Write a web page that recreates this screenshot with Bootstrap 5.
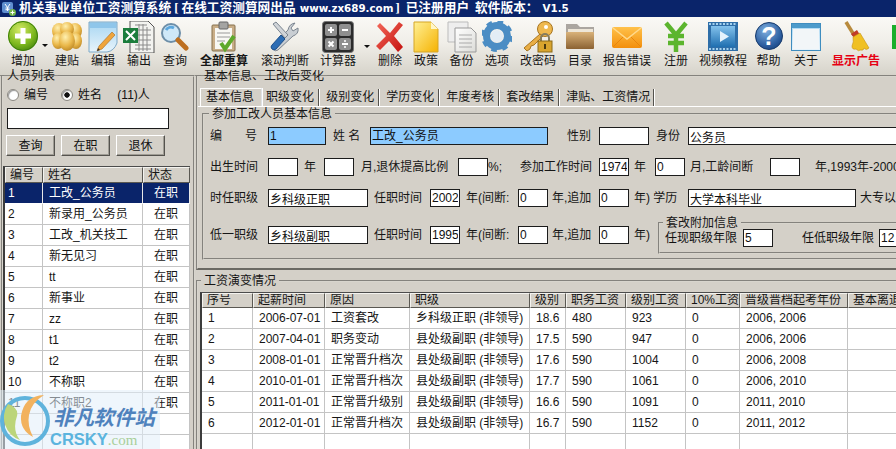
<!DOCTYPE html>
<html lang="zh-CN">
<head>
<meta charset="utf-8">
<title>机关事业单位工资测算系统</title>
<link href="https://cdn.jsdelivr.net/npm/bootstrap@5.3.0/dist/css/bootstrap.min.css" rel="stylesheet">
<style>
html,body{height:449px;overflow:hidden;margin:0}
body{background:#d4d0c8;color:#111;font:12px/14px "Liberation Sans","Noto Sans CJK SC",sans-serif}
.app-shell{position:relative;width:896px;height:449px;overflow:hidden}
.svgdefs{position:absolute;width:0;height:0}
.title-bar{height:17px;background:#0a246a;color:#fff;font:700 12.7px/17px "Liberation Serif","Noto Sans CJK SC",serif;padding-left:2px;white-space:nowrap}
.title-bar svg{margin-right:3px;flex:none}
.tt-ltn{font:700 10.3px/17px "DejaVu Sans",sans-serif;margin:0 2px 0 4px}
.tt-brk{margin:0 3px}
.tt-gap{margin-left:6px}
.tool-bar{height:59px;background:linear-gradient(#faf9f5,#f0eee8 45%,#d6d3ca);padding-top:4px;display:grid;grid-template-columns:5px 36px 8px 36px 36px 36px 36px 62px 60px 46px 11px 36px 36px 35px 36px 46px 38px 56px 42px 52px 39px 36px 64px 8px;border-bottom:1px solid #8c8a84}
.tool-item{display:flex;flex-direction:column;align-items:center;font-size:12px;line-height:13px;white-space:nowrap;color:#161616}
.tool-item svg{display:block;height:32px;flex:none;margin-bottom:2px}
.tool-strong{font-weight:700}
.tool-red{font-weight:700;color:#e60012}
.tool-arrow{width:0;height:0;border:3px solid transparent;border-top:3px solid #111;border-bottom:0;margin:23px 0 0 1px}
.tool-arrow-b{margin-left:3px;margin-top:24px}
.tool-end{background:#1cae2c;margin:4px 0 8px 4px;height:24px}
.main-area{display:flex;margin-top:-6px;height:379px}
.side-col{width:195px;flex:none;padding-left:1px}
.work-col{flex:1 1 auto;min-width:0;overflow:hidden;padding-left:1px}
fieldset.grp{border:2px groove #d8d5cd;padding:0;margin:0;min-width:0}
fieldset.grp>legend{float:none;width:auto;font-size:12px;line-height:12px;padding:0 3px;margin:0 0 0 3px;color:#161616}
.side-grp{height:382px;overflow:hidden}
fieldset.side-grp>legend{margin-left:1px}
.radio-row{height:14px;margin:6px 0 0 4px;gap:5px}
.radio-row .form-check-input{width:12px;height:12px;margin:0;border:1px solid #8a8780;border-radius:50%;background-color:#fff;box-shadow:inset 1px 1px 1px #999;flex:none}
.radio-row .form-check-input:checked{background-image:radial-gradient(circle,#111 0 2.4px,transparent 3px);background-color:#fff;border-color:#8a8780}
.radio-lbl{margin-right:8px}
.radio-cnt{margin-left:7px}
.form-control.fld{border:1px solid #1c1c1c;border-radius:0;height:18px;min-height:18px;padding:0 1px;font:12px/16px "Liberation Sans","Noto Sans CJK SC",sans-serif;color:#111;background:#fff;box-shadow:none;flex:none}
.form-control.fld-blue{background:#8ccbff}
.form-control.search-box{width:162px;margin:6px 0 0 4px;height:21px}
.btn-row{gap:6px;margin:6px 0 10px 3px}
.btn.btn-win{width:49px;height:21px;padding:0;border:1px solid;border-color:#fff #55534e #55534e #fff;border-radius:0;background:#d4d0c8;font-size:12px;line-height:18px;color:#111;box-shadow:inset -1px -1px 0 #a09d95}
.table.grid-tb{border-collapse:separate;border-spacing:0;table-layout:fixed;margin:0;font-size:12px;border-left:2px solid #3c3c3c;border-top:1px solid #4c4c4c;background:#fff}
.table.grid-tb>thead>tr>th{height:16px;padding:0 4px;line-height:14px;font-weight:400;background:#d4d0c8;color:#161616;border:1px solid;border-color:#f4f3ef #5a5852 #5a5852 #f4f3ef;white-space:nowrap;overflow:hidden;box-shadow:none}
.table.grid-tb>tbody>tr>td{height:21px;padding:0 6px;line-height:20px;background:#fff;color:#161616;border:0;border-right:1px solid #c4c4c4;border-bottom:1px solid #c4c4c4;white-space:nowrap;overflow:hidden;box-shadow:none}
.table.grid-tb>tbody>tr.sel-row>td{background:#0a246a;color:#fff;border-bottom:1px solid #fff;border-right:1px solid #e8e8e8}
.table.left-grid{width:187px}
.table.left-grid>tbody>tr>td:first-child{padding-left:3px}
.table.right-grid{width:730px}
.table.right-grid>thead>tr>th{height:15px;line-height:13px}
.table.grid-tb>tbody>tr>td.c-center{text-align:center;padding:0}
.c38{width:38px}.c100{width:100px}.c47{width:47px}
.c51{width:51px}.c72{width:72px}.c85{width:85px}.c120{width:120px}.c36{width:36px}.c60{width:60px}.c54{width:54px}.c108{width:108px}.c82{width:82px}
fieldset.top-grp{height:200px;margin-right:-12px;border-bottom:2px solid #6a6862}
.bot-grp{height:190px;margin:5px -12px 0 0!important;padding:0}
.tab-strip{margin:6px 0 0 2px;height:18px;border:0;flex-wrap:nowrap}
.tab-strip .nav-link{height:17px;margin:1px 0 0;padding:1px 0 0 4px;border:0;border-radius:0;border-right:1px solid #55534e;box-shadow:1px 0 0 #fff;background:transparent;color:#161616;font-size:12px;line-height:14px;white-space:nowrap;text-align:left}
.tab-strip .nav-link.active{height:18px;margin-top:0;padding:1px 0 0 5px;background:#d4d0c8;border-top:1px solid #fff;border-left:1px solid #fff;color:#111;font-size:12px}
.tw62{width:62px}.tw57{width:57px}.tw60{width:60px}.tw95{width:95px}
.tab-panel{border-top:1px solid #fff;height:160px;padding:1px 0 0 4px}
.info-grp{height:152px}
fieldset.info-grp>legend{margin-left:5px}
.form-body{padding:7px 0 0 6px;white-space:nowrap;width:800px}
.form-line{display:flex;align-items:flex-start;line-height:18px}
.form-line+.form-line{margin-top:13px}
.form-line.line-last{margin-top:19px}
.lb{flex:none;display:block;height:18px;color:#161616}
.pl4{padding-left:4px}.pl5{padding-left:5px}.pl6{padding-left:6px}.pl7{padding-left:7px}.pl15{padding-left:15px}.pl19{padding-left:19px}
.form-control.w30,.w30{width:30px}.w26{width:26px}.w29{width:29px}.w39{width:39px}.w44{width:44px}.w51{width:51px}.w59{width:59px}.w62{width:62px}.w85{width:85px}.w104{width:104px}.w111{width:111px}
.w58{width:58px}.form-control.w58{width:58px}.form-control.w50{width:50px}.form-control.w100{width:100px}.form-control.w168{width:168px}.form-control.w178{width:178px}.form-control.w230{width:230px}
.gap-em{display:inline-block;width:23px}
.gap-sp{display:inline-block;width:18px}
fieldset.sub-grp{width:300px;height:37px;margin-top:-9px;flex:none}
fieldset.sub-grp>legend{margin-left:3px}
.sub-line{display:flex;margin:0 0 0 5px;line-height:18px}
.sub-line .w78{width:78px;flex:none}
.sub-line .w106{width:106px;flex:none;padding-left:29px}
.table-wrap{margin:5px 0 0 2px;overflow:hidden}
.wm-box{position:absolute;left:0;top:390px;width:160px;height:59px;background:rgba(226,238,250,.55);pointer-events:none}
.wm-logo{position:absolute;left:0;top:2px}
.wm-cn{position:absolute;left:53px;top:13px;font:italic 700 20.5px/26px "Noto Sans CJK SC",sans-serif;letter-spacing:-.2px;color:#4f82bd;white-space:nowrap}
.wm-en{position:absolute;left:50px;top:39px;font:700 16.5px/20px "Liberation Sans",sans-serif;color:#5bb4de;white-space:nowrap}
.wm-en span{font:400 15px/20px "Liberation Serif",serif;color:#a8cf9a}
</style>
</head>
<body>
<svg class="svgdefs" aria-hidden="true">
<defs>
<radialGradient id="gGreen" cx=".4" cy=".3" r=".8"><stop offset="0" stop-color="#d5ea66"/><stop offset=".6" stop-color="#7eb81e"/><stop offset="1" stop-color="#3d7f0b"/></radialGradient>
<radialGradient id="gGold" cx=".4" cy=".3" r=".8"><stop offset="0" stop-color="#fff0b0"/><stop offset=".55" stop-color="#eab84a"/><stop offset="1" stop-color="#b57f1e"/></radialGradient>
<linearGradient id="gSky" x1="0" y1="0" x2="0" y2="1"><stop offset="0" stop-color="#a7d6f2"/><stop offset="1" stop-color="#e8f4fb"/></linearGradient>
<linearGradient id="gPaper" x1="0" y1="0" x2="1" y2="1"><stop offset="0" stop-color="#fff"/><stop offset="1" stop-color="#dcdcd8"/></linearGradient>
<linearGradient id="gYellow" x1="0" y1="0" x2="1" y2="1"><stop offset="0" stop-color="#fff095"/><stop offset="1" stop-color="#f5b200"/></linearGradient>
<radialGradient id="gBlue" cx=".4" cy=".3" r=".8"><stop offset="0" stop-color="#7fb0e0"/><stop offset=".7" stop-color="#2c5d9f"/><stop offset="1" stop-color="#183f78"/></radialGradient>
<linearGradient id="gFolder" x1="0" y1="0" x2="0" y2="1"><stop offset="0" stop-color="#d9b27a"/><stop offset="1" stop-color="#8b6232"/></linearGradient>
<linearGradient id="gOrange" x1="0" y1="0" x2="0" y2="1"><stop offset="0" stop-color="#ffc14a"/><stop offset="1" stop-color="#f38f0c"/></linearGradient>
<linearGradient id="gFilm" x1="0" y1="0" x2="0" y2="1"><stop offset="0" stop-color="#83c2ec"/><stop offset="1" stop-color="#1f6fb0"/></linearGradient>
<linearGradient id="gRed" x1="0" y1="0" x2="1" y2="1"><stop offset="0" stop-color="#f46a5c"/><stop offset="1" stop-color="#c4100c"/></linearGradient>
</defs>
</svg>
<div class="app-shell">
  <div class="title-bar d-flex align-items-center">
    <svg width="14" height="15" viewBox="0 0 14 15"><rect x="0" y="1" width="11" height="11" rx="2" fill="#5f8fd0"/><path d="M3 3l2.500 3.500L8 3M5.500 6.500V10M3.500 7h4M3.500 8.700h4" stroke="#fff" fill="none"/><circle cx="10.500" cy="11.500" r="3.500" fill="#74b64a"/><path d="M10.500 9.500v4M8.500 11.500h4" stroke="#fff"/></svg>
    <span>机关事业单位工资测算系统<span class="tt-brk">[</span>在线工资测算网出品<span class="tt-ltn">www.zx689.com</span>]<span class="tt-gap">已注册用户</span><span class="tt-gap">软件版本：</span><span class="tt-ltn">V1.5</span></span>
  </div>
  <div class="tool-bar">
    <div></div>
    <div class="tool-item"><svg width="32" viewBox="0 0 32 32"><circle cx="16" cy="15" r="15" fill="url(#gGreen)"/><circle cx="16" cy="15" r="14.500" fill="none" stroke="#3d7f0b"/><path d="M16 7v16M8 15h16" stroke="#fff" stroke-width="5"/></svg>增加</div>
    <div><div class="tool-arrow"></div></div>
    <div class="tool-item"><svg width="34" viewBox="0 0 34 32"><ellipse cx="9" cy="10" rx="7" ry="8" fill="url(#gGold)"/><ellipse cx="25" cy="10" rx="7" ry="8" fill="url(#gGold)"/><ellipse cx="17" cy="8" rx="7" ry="7" fill="url(#gGold)"/><ellipse cx="8" cy="20" rx="6" ry="8" fill="url(#gGold)"/><ellipse cx="26" cy="20" rx="6" ry="8" fill="url(#gGold)"/><ellipse cx="17" cy="20" rx="8" ry="10" fill="url(#gGold)"/></svg>建贴</div>
    <div class="tool-item"><svg width="30" viewBox="0 0 30 32"><path d="M1 1h28v21q-3 8-10 9H1z" fill="url(#gSky)" stroke="#7da9c8"/><rect x="2" y="2" width="26" height="5" fill="#8fc6ea"/><path d="M24 11L11 25l-2 5 5-2L27 14z" fill="#efa53c" stroke="#a86a1c" stroke-width=".6"/><path d="M9 30l1-3 2 2z" fill="#333"/></svg>编辑</div>
    <div class="tool-item"><svg width="32" viewBox="0 0 32 32"><path d="M7 0h18l6 6v26H7z" fill="#f3f3f0" stroke="#555"/><path d="M12 4h12M12 9h16M12 14h16M12 19h16M12 24h16M12 28h16M16 3v27M20 3v27M24 6v24" stroke="#8b8b8b" stroke-width="1"/><rect x="0" y="7" width="15" height="15" fill="#1b7d3c"/><path d="M3 10l9 9M12 10l-9 9" stroke="#fff" stroke-width="2"/></svg>输出</div>
    <div class="tool-item"><svg width="28" viewBox="0 0 28 32"><circle cx="10" cy="12" r="9" fill="#cfe8f8" stroke="#6d8ea8" stroke-width="2"/><path d="M5 9a6 6 0 0 1 8-2" stroke="#5ca7dd" stroke-width="3" fill="none"/><path d="M17 19l8 8" stroke="#bd6f20" stroke-width="5" stroke-linecap="round"/></svg>查询</div>
    <div class="tool-item tool-strong"><svg width="28" viewBox="0 0 28 32"><rect x="2" y="4" width="23" height="26" rx="1" fill="#c9ae88" stroke="#86704d"/><rect x="5" y="7" width="17" height="21" fill="#f8f8f4"/><rect x="9" y="1" width="9" height="7" rx="1" fill="#a4a4a2" stroke="#666"/><path d="M7 12h13M7 16h13M7 20h8" stroke="#9a9a9a"/><path d="M11 22l4 6 9-13" stroke="#5ea92c" stroke-width="4" fill="none"/></svg>全部重算</div>
    <div class="tool-item"><svg width="30" viewBox="0 0 30 32"><path d="M25 2l-4 5 2 3 5-3q1 6-5 8l-15 14q-3 2-5-1t1-5L18 9q1-6 7-7z" fill="#c9ced3" stroke="#7b8590"/><path d="M3 3l3-2 12 13-3 3z" fill="#d0d4d8" stroke="#7b8590"/><path d="M15 18l-9 10q-2 2-4 0t0-4l9-10 4 4z" fill="#2d6db4" stroke="#1d4f8a"/></svg>滚动判断</div>
    <div class="tool-item"><svg width="32" viewBox="0 0 32 32"><rect x=".5" y=".5" width="31" height="31" rx="3" fill="#2b2b2b" stroke="#777"/><rect x="3" y="3" width="12" height="12" rx="2" fill="#8f8f8f"/><rect x="17" y="3" width="12" height="12" rx="2" fill="#8f8f8f"/><rect x="3" y="17" width="12" height="12" rx="2" fill="#8f8f8f"/><rect x="17" y="17" width="12" height="12" rx="2" fill="#8f8f8f"/><path d="M9 6v6M6 9h6M20 9h6M6.500 20.500l5 5M11.500 20.500l-5 5M20 23h6" stroke="#fff" stroke-width="2"/><circle cx="23" cy="20" r="1" fill="#fff"/><circle cx="23" cy="26" r="1" fill="#fff"/></svg>计算器</div>
    <div><div class="tool-arrow tool-arrow-b"></div></div>
    <div class="tool-item"><svg width="28" viewBox="0 0 28 32"><path d="M4 2l10 10L23 1l4 3-9 11 9 11-5 5-9-11-9 9-4-4 10-10L1 5z" fill="url(#gRed)"/></svg>删除</div>
    <div class="tool-item"><svg width="26" viewBox="0 0 26 32"><path d="M1 1h17l7 7v23H1z" fill="url(#gYellow)" stroke="#d5a526"/><path d="M18 1l7 7h-7z" fill="#fff6c8"/></svg>政策</div>
    <div class="tool-item"><svg width="30" viewBox="0 0 30 32"><path d="M1 1h20v20H1z" fill="#eee" stroke="#bbb"/><path d="M8 7h16l5 5v19H8z" fill="url(#gPaper)" stroke="#999"/><path d="M12 14h13M12 18h13M12 22h13M12 26h13" stroke="#aaa"/></svg>备份</div>
    <div class="tool-item"><svg width="30" viewBox="0 0 30 32"><circle cx="15" cy="15" r="10.500" fill="none" stroke="#4b8dc4" stroke-width="7"/><circle cx="15" cy="15" r="14" fill="none" stroke="#4b8dc4" stroke-width="4" stroke-dasharray="5.500 5.500"/><circle cx="15" cy="15" r="6" fill="#e3edf5"/></svg>选项</div>
    <div class="tool-item"><svg width="34" viewBox="0 0 34 32"><circle cx="24" cy="8" r="7.500" fill="#eeb84f" stroke="#a87520"/><circle cx="25" cy="6" r="2" fill="#fff"/><path d="M19 13L3 27l3 3 3-2 1-3 3-1 9-9z" fill="#e9ae45" stroke="#a87520"/><path d="M20 20v-3a4 4 0 0 1 8 0v3" stroke="#857d60" stroke-width="2" fill="none"/><rect x="17" y="20" width="14" height="11" fill="#d8a42e" stroke="#8c6a18"/><rect x="23" y="23" width="2" height="5" fill="#4a3a10"/></svg>改密码</div>
    <div class="tool-item"><svg width="30" viewBox="0 0 30 32"><path d="M1 7V3h11l3 3h14v8H1z" fill="#aba6a0"/><rect x="1" y="11" width="28" height="17" rx="1" fill="url(#gFolder)"/><rect x="3" y="8" width="25" height="3" fill="#ede6d8"/></svg>目录</div>
    <div class="tool-item"><svg width="30" viewBox="0 0 30 32"><rect x="0" y="6" width="30" height="21" rx="2" fill="url(#gOrange)"/><path d="M1 7l14 11L29 7" fill="none" stroke="#ffd98c" stroke-width="1.500"/><path d="M1 26l10-10M29 26L19 16" stroke="#e8860c"/></svg>报告错误</div>
    <div class="tool-item"><svg width="28" viewBox="0 0 28 32"><path d="M4 2l10 12L24 2M14 14v17M6 15h16M6 22h16" stroke="#5cb52e" stroke-width="4.500" fill="none"/></svg>注册</div>
    <div class="tool-item"><svg width="30" viewBox="0 0 30 32"><rect x="0" y="1" width="30" height="29" fill="#2e6ea8"/><rect x="3" y="5" width="24" height="21" fill="url(#gFilm)"/><path d="M1 3h28M1 28h28" stroke="#a6d2ee" stroke-width="2" stroke-dasharray="2 1.500"/><path d="M12 10v11l9-5.500z" fill="#e4f3fc"/></svg>视频教程</div>
    <div class="tool-item"><svg width="28" viewBox="0 0 28 32"><circle cx="14" cy="15" r="13.500" fill="url(#gBlue)" stroke="#163a6c"/><text x="14" y="24" text-anchor="middle" font-family="Liberation Sans" font-weight="700" font-size="25" fill="#fff">?</text></svg>帮助</div>
    <div class="tool-item"><svg width="30" viewBox="0 0 30 32"><rect x=".5" y="2.500" width="29" height="27" fill="url(#gSky)" stroke="#3f8dbf"/><rect x="1" y="3" width="28" height="4" fill="#4c9bcb"/><rect x="2" y="8" width="26" height="20" fill="#f2f6f8"/></svg>关于</div>
    <div class="tool-item tool-red"><svg width="28" viewBox="0 0 28 32"><path d="M4 1l8 13" stroke="#b88a3c" stroke-width="3.500"/><path d="M9 13l6-4 3 5-6 3z" fill="#c03c28"/><path d="M11 16l7-4 9 15q-3 3-5 0 0 3-4 2-1 2-4-1-4 1-4-3 2-4 1-9z" fill="#f0c022" stroke="#c79212" stroke-width=".6"/></svg>显示广告</div>
    <div class="tool-end"></div>
  </div>
  <div class="main-area">
    <div class="side-col">
      <fieldset class="grp side-grp">
        <legend>人员列表</legend>
        <div class="d-flex align-items-center radio-row">
          <input class="form-check-input" type="radio" name="q" aria-label="编号"><span class="radio-lbl">编号</span>
          <input class="form-check-input" type="radio" name="q" checked aria-label="姓名"><span>姓名</span>
          <span class="radio-cnt">&nbsp;(11)人</span>
        </div>
        <input class="form-control fld search-box" type="text" aria-label="查询">
        <div class="d-flex btn-row">
          <button class="btn btn-win" type="button">查询</button>
          <button class="btn btn-win" type="button">在职</button>
          <button class="btn btn-win" type="button">退休</button>
        </div>
        <table class="table grid-tb left-grid">
          <colgroup><col class="c38"><col class="c100"><col class="c47"></colgroup>
          <thead><tr><th>编号</th><th>姓名</th><th>状态</th></tr></thead>
          <tbody>
            <tr class="sel-row"><td>1</td><td>工改_公务员</td><td class="c-center">在职</td></tr>
            <tr><td>2</td><td>新录用_公务员</td><td class="c-center">在职</td></tr>
            <tr><td>3</td><td>工改_机关技工</td><td class="c-center">在职</td></tr>
            <tr><td>4</td><td>新无见习</td><td class="c-center">在职</td></tr>
            <tr><td>5</td><td>tt</td><td class="c-center">在职</td></tr>
            <tr><td>6</td><td>新事业</td><td class="c-center">在职</td></tr>
            <tr><td>7</td><td>zz</td><td class="c-center">在职</td></tr>
            <tr><td>8</td><td>t1</td><td class="c-center">在职</td></tr>
            <tr><td>9</td><td>t2</td><td class="c-center">在职</td></tr>
            <tr><td>10</td><td>不称职</td><td class="c-center">在职</td></tr>
            <tr><td>11</td><td>不称职2</td><td class="c-center">在职</td></tr>
            <tr><td>&nbsp;</td><td></td><td></td></tr>
            <tr><td>&nbsp;</td><td></td><td></td></tr>
          </tbody>
        </table>
      </fieldset>
    </div>
    <div class="work-col">
      <fieldset class="grp top-grp">
        <legend>基本信息、工改后变化</legend>
        <ul class="nav nav-tabs tab-strip">
          <li class="nav-item"><a class="nav-link active tw62" href="#">基本信息</a></li>
          <li class="nav-item"><a class="nav-link tw57" href="#">职级变化</a></li>
          <li class="nav-item"><a class="nav-link tw60" href="#">&nbsp;级别变化</a></li>
          <li class="nav-item"><a class="nav-link tw60" href="#">&nbsp;学历变化</a></li>
          <li class="nav-item"><a class="nav-link tw60" href="#">&nbsp;年度考核</a></li>
          <li class="nav-item"><a class="nav-link tw60" href="#">&nbsp;套改结果</a></li>
          <li class="nav-item"><a class="nav-link tw95" href="#">&nbsp;津贴、工资情况</a></li>
        </ul>
        <div class="tab-panel">
          <fieldset class="grp info-grp">
            <legend>参加工改人员基本信息</legend>
            <div class="form-body">
              <div class="form-line">
                <span class="lb w58">编<span class="gap-em"></span>号</span>
                <input class="form-control fld fld-blue w58" value="1" aria-label="编号">
                <span class="lb w44 pl7">姓 名</span>
                <div class="form-control fld fld-blue w178">工改_公务员</div>
                <span class="lb w51 pl19">性别</span>
                <input class="form-control fld w50" aria-label="性别">
                <span class="lb w39 pl7">身份</span>
                <input class="form-control fld w230" value="公务员" aria-label="身份">
              </div>
              <div class="form-line">
                <span class="lb w58">出生时间</span>
                <input class="form-control fld w30" aria-label="出生年">
                <span class="lb w26 pl6">年</span>
                <input class="form-control fld w30" aria-label="出生月">
                <span class="lb w104 pl7">月,退休提高比例</span>
                <input class="form-control fld w30" aria-label="比例">
                <span class="lb w111">%;<span class="gap-sp"></span>参加工作时间</span>
                <input class="form-control fld w30" value="1974" aria-label="工作年">
                <span class="lb w26 pl5">年</span>
                <input class="form-control fld w30" value="0" aria-label="工作月">
                <span class="lb w85 pl5">月,工龄间断</span>
                <input class="form-control fld w30" aria-label="工龄间断">
                <span class="lb pl15">年,1993年-2000年</span>
              </div>
              <div class="form-line">
                <span class="lb w58">时任职级</span>
                <input class="form-control fld w100" value="乡科级正职" aria-label="时任职级">
                <span class="lb w62 pl6">任职时间</span>
                <input class="form-control fld w30" value="2002" aria-label="任职时间">
                <span class="lb w58 pl6">年(间断:</span>
                <input class="form-control fld w30" value="0" aria-label="间断">
                <span class="lb w51 pl4">年,追加</span>
                <input class="form-control fld w30" value="0" aria-label="追加">
                <span class="lb w59 pl5">年) 学历</span>
                <input class="form-control fld w168" value="大学本科毕业" aria-label="学历">
                <span class="lb pl4">大专以上</span>
              </div>
              <div class="form-line line-last">
                <span class="lb w58">低一职级</span>
                <input class="form-control fld w100" value="乡科级副职" aria-label="低一职级">
                <span class="lb w62 pl6">任职时间</span>
                <input class="form-control fld w30" value="1995" aria-label="任职时间">
                <span class="lb w58 pl6">年(间断:</span>
                <input class="form-control fld w30" value="0" aria-label="间断">
                <span class="lb w51 pl4">年,追加</span>
                <input class="form-control fld w30" value="0" aria-label="追加">
                <span class="lb w29 pl5">年)</span>
                <fieldset class="grp sub-grp">
                  <legend>套改附加信息</legend>
                  <div class="sub-line">
                    <span class="w78">任现职级年限</span>
                    <input class="form-control fld w30" value="5" aria-label="任现职级年限">
                    <span class="w106">任低职级年限</span>
                    <input class="form-control fld w30" value="12" aria-label="任低职级年限">
                  </div>
                </fieldset>
              </div>
            </div>
          </fieldset>
        </div>
      </fieldset>
      <fieldset class="grp bot-grp">
        <legend>工资演变情况</legend>
        <div class="table-wrap">
          <table class="table grid-tb right-grid">
            <colgroup><col class="c51"><col class="c72"><col class="c85"><col class="c120"><col class="c36"><col class="c60"><col class="c60"><col class="c54"><col class="c108"><col class="c82"></colgroup>
            <thead><tr><th>序号</th><th>起薪时间</th><th>原因</th><th>职级</th><th>级别</th><th>职务工资</th><th>级别工资</th><th>10%工资</th><th>晋级晋档起考年份</th><th>基本离退休费</th></tr></thead>
            <tbody>
              <tr><td>1</td><td>2006-07-01</td><td>工资套改</td><td>乡科级正职 (非领导)</td><td>18.6</td><td>480</td><td>923</td><td>0</td><td>2006, 2006</td><td></td></tr>
              <tr><td>2</td><td>2007-04-01</td><td>职务变动</td><td>县处级副职 (非领导)</td><td>17.5</td><td>590</td><td>947</td><td>0</td><td>2006, 2006</td><td></td></tr>
              <tr><td>3</td><td>2008-01-01</td><td>正常晋升档次</td><td>县处级副职 (非领导)</td><td>17.6</td><td>590</td><td>1004</td><td>0</td><td>2006, 2008</td><td></td></tr>
              <tr><td>4</td><td>2010-01-01</td><td>正常晋升档次</td><td>县处级副职 (非领导)</td><td>17.7</td><td>590</td><td>1061</td><td>0</td><td>2006, 2010</td><td></td></tr>
              <tr><td>5</td><td>2011-01-01</td><td>正常晋升级别</td><td>县处级副职 (非领导)</td><td>16.6</td><td>590</td><td>1091</td><td>0</td><td>2011, 2010</td><td></td></tr>
              <tr><td>6</td><td>2012-01-01</td><td>正常晋升档次</td><td>县处级副职 (非领导)</td><td>16.7</td><td>590</td><td>1152</td><td>0</td><td>2011, 2012</td><td></td></tr>
              <tr><td>&nbsp;</td><td></td><td></td><td></td><td></td><td></td><td></td><td></td><td></td><td></td></tr>
            </tbody>
          </table>
        </div>
      </fieldset>
    </div>
  </div>
  <div class="wm-box">
    <svg class="wm-logo" width="56" height="56" viewBox="0 0 56 56"><circle cx="25" cy="29" r="23" fill="none" stroke="#5fb3dc" stroke-width="4"/><path d="M8 12a24 24 0 0 0 12 36q-8-10-3-24 2-8-9-12z" fill="#bcd57a"/><path d="M44 3Q24 4 21 24q-1 14 12 21-6-12-4-22 2-12 15-20z" fill="#f2b25e"/></svg>
    <div class="wm-cn">非凡软件站</div>
    <div class="wm-en">CRSKY<span>.com</span></div>
  </div>
</div>
</body>
</html>
